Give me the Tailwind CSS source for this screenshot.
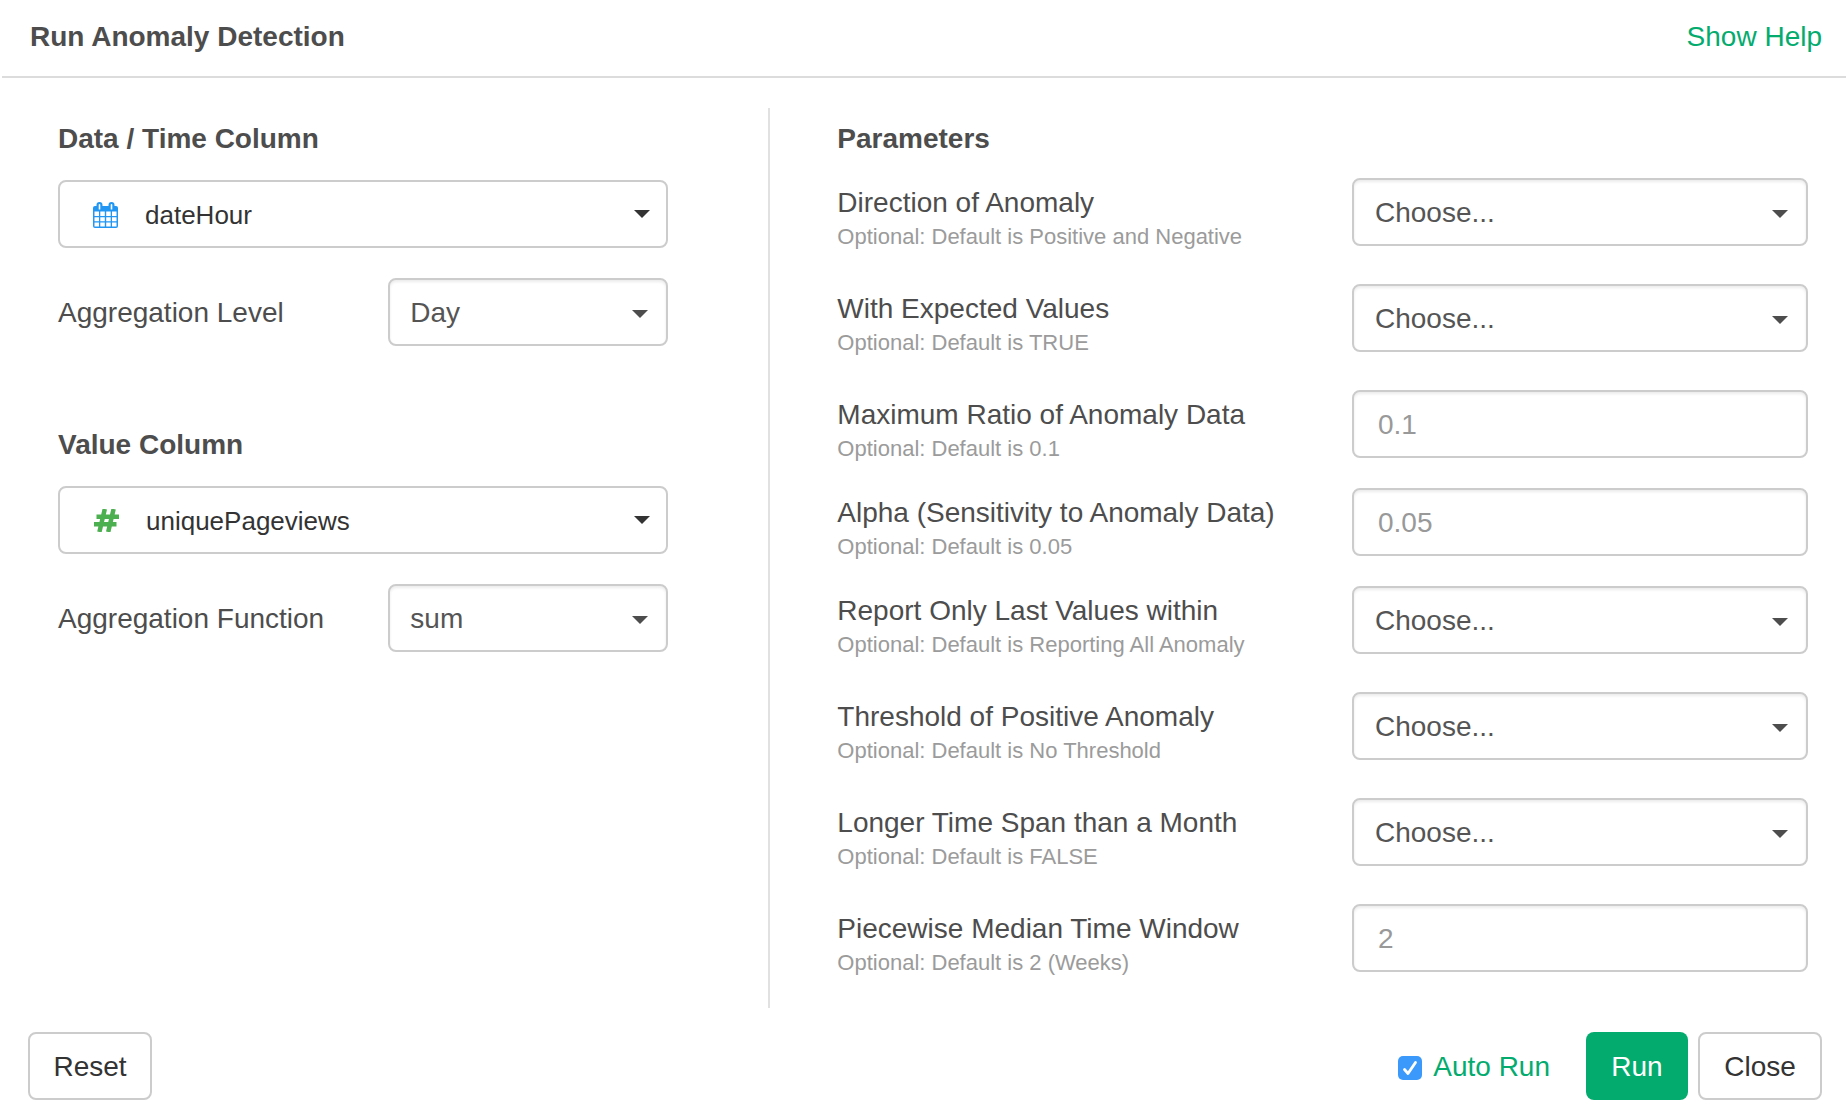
<!DOCTYPE html>
<html lang="en">
<head>
<meta charset="utf-8">
<meta name="viewport" content="width=device-width, initial-scale=1">
<title>Run Anomaly Detection</title>
<script src="https://cdn.jsdelivr.net/npm/@tailwindcss/browser@4"></script>
</head>
<body class="bg-white font-['Helvetica_Neue','Liberation_Sans',sans-serif] text-[28px] leading-10 text-[#4d4d4d]">
<svg class="hidden" aria-hidden="true">
  <symbol id="caret" viewBox="0 0 16 8"><path d="M0 0h16L8 8z" fill="currentColor"/></symbol>
</svg>

<header class="ml-0.5 flex items-center justify-between border-b-2 border-[#dcdcdc] pt-[17px] pr-6 pb-[19px] pl-7">
  <h1 class="font-bold">Run Anomaly Detection</h1>
  <a href="#help" class="text-[#04ab6e]">Show Help</a>
</header>

<form>
  <main class="ml-0.5 grid grid-cols-[5fr_7fr] pt-[30px]">
    <div class="border-r-2 border-[#e1e1e1] pt-[11px] pr-[100px] pl-14">
      <section>
        <h2 class="mb-[21px] font-bold"><label for="time-column">Data / Time Column</label></h2>
        <div class="relative mb-[30px]">
          <svg class="pointer-events-none absolute top-[22px] left-[35px] h-[26px] w-[25px]" viewBox="0 0 25 26" aria-hidden="true">
            <rect x="0" y="4" width="25" height="22" rx="2" fill="#2196f3"/>
            <rect x="3.500" y="0" width="6" height="9" rx="3" fill="#2196f3"/>
            <rect x="15.500" y="0" width="6" height="9" rx="3" fill="#2196f3"/>
            <path d="M5.700 2.500q.8-1.200 1.600 0v5h-1.600zM17.700 2.500q.8-1.200 1.600 0v5h-1.600z" fill="#fff"/>
            <path d="M1.500 9.500H6V14H1.500zM7.300 9.500h4.500V14H7.300zM13.200 9.500h4.500V14h-4.500zM19 9.500h4.500V14H19zM1.500 15.300H6v4H1.500zM7.300 15.300h4.500v4H7.300zM13.200 15.300h4.500v4h-4.500zM19 15.300h4.500v4H19zM1.500 20.600H6v3.900H1.500zM7.300 20.600h4.500v3.900H7.300zM13.200 20.600h4.500v3.900h-4.500zM19 20.600h4.500v3.900H19z" fill="#fff"/>
          </svg>
          <select id="time-column" class="block h-[68px] w-full appearance-none rounded-lg border-2 border-[#ccc] bg-white pt-0.5 pr-12 pl-[85px] text-[26px] text-[#333]"><option>dateHour</option></select>
          <svg class="pointer-events-none absolute top-[30px] right-[18px] h-2 w-4 text-[#333]" aria-hidden="true"><use href="#caret"/></svg>
        </div>
        <div class="flex items-center justify-between">
          <label for="level" class="pt-0.5">Aggregation Level</label>
          <div class="relative w-[280px]">
            <select id="level" class="block h-[68px] w-full appearance-none rounded-lg border-2 border-[#ccc] bg-white pt-0.5 pr-12 pl-5 text-[#555] shadow-[inset_0_2px_3px_rgba(0,0,0,0.08)]"><option>Day</option></select>
            <svg class="pointer-events-none absolute top-8 right-5 h-2 w-4" aria-hidden="true"><use href="#caret"/></svg>
          </div>
        </div>
      </section>

      <section class="mt-[79px]">
        <h2 class="mb-[21px] font-bold"><label for="value-column">Value Column</label></h2>
        <div class="relative mb-[30px]">
          <svg class="pointer-events-none absolute top-[23px] left-9 h-[23px] w-[25px]" viewBox="0 0 25 23" aria-hidden="true" fill="none" stroke="#4caf50" stroke-width="4.500">
            <path d="M2.500 7.700H25M0 15.300H22.500M10.800 0 5.400 23M19.600 0 14.200 23"/>
          </svg>
          <select id="value-column" class="block h-[68px] w-full appearance-none rounded-lg border-2 border-[#ccc] bg-white pt-0.5 pr-12 pl-[86px] text-[26px] text-[#333]"><option>uniquePageviews</option></select>
          <svg class="pointer-events-none absolute top-[30px] right-[18px] h-2 w-4 text-[#333]" aria-hidden="true"><use href="#caret"/></svg>
        </div>
        <div class="flex items-center justify-between">
          <label for="function" class="pt-0.5">Aggregation Function</label>
          <div class="relative w-[280px]">
            <select id="function" class="block h-[68px] w-full appearance-none rounded-lg border-2 border-[#ccc] bg-white pt-0.5 pr-12 pl-5 text-[#555] shadow-[inset_0_2px_3px_rgba(0,0,0,0.08)]"><option>sum</option></select>
            <svg class="pointer-events-none absolute top-8 right-5 h-2 w-4" aria-hidden="true"><use href="#caret"/></svg>
          </div>
        </div>
      </section>
    </div>

    <section class="pt-[11px] pr-[38px] pb-[30px] pl-[67px]">
      <h2 class="mb-[19px] font-bold">Parameters</h2>

      <div class="mb-8 flex justify-between">
        <div class="pt-[7px]">
          <label for="direction" class="block leading-9">Direction of Anomaly</label>
          <p class="text-[22px] leading-[31px] text-[#9b9b9b]">Optional: Default is Positive and Negative</p>
        </div>
        <div class="relative w-[456px] shrink-0">
          <select id="direction" class="block h-[68px] w-full appearance-none rounded-lg border-2 border-[#ccc] bg-white pt-0.5 pr-12 pl-[21px] text-[#555] shadow-[inset_0_2px_3px_rgba(0,0,0,0.08)]"><option>Choose...</option></select>
          <svg class="pointer-events-none absolute top-8 right-5 h-2 w-4" aria-hidden="true"><use href="#caret"/></svg>
        </div>
      </div>

      <div class="mb-8 flex justify-between">
        <div class="pt-[7px]">
          <label for="expected" class="block leading-9">With Expected Values</label>
          <p class="text-[22px] leading-[31px] text-[#9b9b9b]">Optional: Default is TRUE</p>
        </div>
        <div class="relative w-[456px] shrink-0">
          <select id="expected" class="block h-[68px] w-full appearance-none rounded-lg border-2 border-[#ccc] bg-white pt-0.5 pr-12 pl-[21px] text-[#555] shadow-[inset_0_2px_3px_rgba(0,0,0,0.08)]"><option>Choose...</option></select>
          <svg class="pointer-events-none absolute top-8 right-5 h-2 w-4" aria-hidden="true"><use href="#caret"/></svg>
        </div>
      </div>

      <div class="mb-6 flex justify-between">
        <div class="pt-[7px]">
          <label for="ratio" class="block leading-9">Maximum Ratio of Anomaly Data</label>
          <p class="text-[22px] leading-[31px] text-[#9b9b9b]">Optional: Default is 0.1</p>
        </div>
        <input id="ratio" type="text" placeholder="0.1" class="h-[68px] w-[456px] shrink-0 rounded-lg border-2 border-[#ccc] px-6 pt-0.5 shadow-[inset_0_2px_3px_rgba(0,0,0,0.08)] placeholder:text-[#999]">
      </div>

      <div class="mb-6 flex justify-between">
        <div class="pt-[7px]">
          <label for="alpha" class="block leading-9">Alpha (Sensitivity to Anomaly Data)</label>
          <p class="text-[22px] leading-[31px] text-[#9b9b9b]">Optional: Default is 0.05</p>
        </div>
        <input id="alpha" type="text" placeholder="0.05" class="h-[68px] w-[456px] shrink-0 rounded-lg border-2 border-[#ccc] px-6 pt-0.5 shadow-[inset_0_2px_3px_rgba(0,0,0,0.08)] placeholder:text-[#999]">
      </div>

      <div class="mb-8 flex justify-between">
        <div class="pt-[7px]">
          <label for="last-values" class="block leading-9">Report Only Last Values within</label>
          <p class="text-[22px] leading-[31px] text-[#9b9b9b]">Optional: Default is Reporting All Anomaly</p>
        </div>
        <div class="relative w-[456px] shrink-0">
          <select id="last-values" class="block h-[68px] w-full appearance-none rounded-lg border-2 border-[#ccc] bg-white pt-0.5 pr-12 pl-[21px] text-[#555] shadow-[inset_0_2px_3px_rgba(0,0,0,0.08)]"><option>Choose...</option></select>
          <svg class="pointer-events-none absolute top-8 right-5 h-2 w-4" aria-hidden="true"><use href="#caret"/></svg>
        </div>
      </div>

      <div class="mb-8 flex justify-between">
        <div class="pt-[7px]">
          <label for="threshold" class="block leading-9">Threshold of Positive Anomaly</label>
          <p class="text-[22px] leading-[31px] text-[#9b9b9b]">Optional: Default is No Threshold</p>
        </div>
        <div class="relative w-[456px] shrink-0">
          <select id="threshold" class="block h-[68px] w-full appearance-none rounded-lg border-2 border-[#ccc] bg-white pt-0.5 pr-12 pl-[21px] text-[#555] shadow-[inset_0_2px_3px_rgba(0,0,0,0.08)]"><option>Choose...</option></select>
          <svg class="pointer-events-none absolute top-8 right-5 h-2 w-4" aria-hidden="true"><use href="#caret"/></svg>
        </div>
      </div>

      <div class="mb-8 flex justify-between">
        <div class="pt-[7px]">
          <label for="longer-span" class="block leading-9">Longer Time Span than a Month</label>
          <p class="text-[22px] leading-[31px] text-[#9b9b9b]">Optional: Default is FALSE</p>
        </div>
        <div class="relative w-[456px] shrink-0">
          <select id="longer-span" class="block h-[68px] w-full appearance-none rounded-lg border-2 border-[#ccc] bg-white pt-0.5 pr-12 pl-[21px] text-[#555] shadow-[inset_0_2px_3px_rgba(0,0,0,0.08)]"><option>Choose...</option></select>
          <svg class="pointer-events-none absolute top-8 right-5 h-2 w-4" aria-hidden="true"><use href="#caret"/></svg>
        </div>
      </div>

      <div class="flex justify-between">
        <div class="pt-[7px]">
          <label for="median-window" class="block leading-9">Piecewise Median Time Window</label>
          <p class="text-[22px] leading-[31px] text-[#9b9b9b]">Optional: Default is 2 (Weeks)</p>
        </div>
        <input id="median-window" type="text" placeholder="2" class="h-[68px] w-[456px] shrink-0 rounded-lg border-2 border-[#ccc] px-6 pt-0.5 shadow-[inset_0_2px_3px_rgba(0,0,0,0.08)] placeholder:text-[#999]">
      </div>
    </section>
  </main>

  <footer class="flex items-center justify-between pt-6 pr-6 pb-3 pl-7">
    <button type="reset" class="h-[68px] w-[124px] rounded-lg border-2 border-[#ccc] bg-white pt-0.5 text-[#333]">Reset</button>
    <div class="flex items-center">
      <span class="relative mt-1 mr-[11px] size-6">
        <input id="auto-run" type="checkbox" checked class="block size-6 appearance-none rounded-[5px] bg-[#3b99fc]">
        <svg class="pointer-events-none absolute inset-0 size-6" viewBox="0 0 24 24" fill="none" stroke="#fff" stroke-width="2.800" stroke-linecap="round" stroke-linejoin="round" aria-hidden="true"><path d="M6.500 13.500 10 17.500 17.500 6.500"/></svg>
      </span>
      <label for="auto-run" class="mr-9 pt-0.5 text-[#04ab6e]">Auto Run</label>
      <button type="button" class="mr-2.5 h-[68px] w-[102px] rounded-lg bg-[#04ab6e] pt-0.5 text-white">Run</button>
      <button type="button" class="h-[68px] w-[124px] rounded-lg border-2 border-[#ccc] bg-white pt-0.5 text-[#333]">Close</button>
    </div>
  </footer>
</form>
</body>
</html>
